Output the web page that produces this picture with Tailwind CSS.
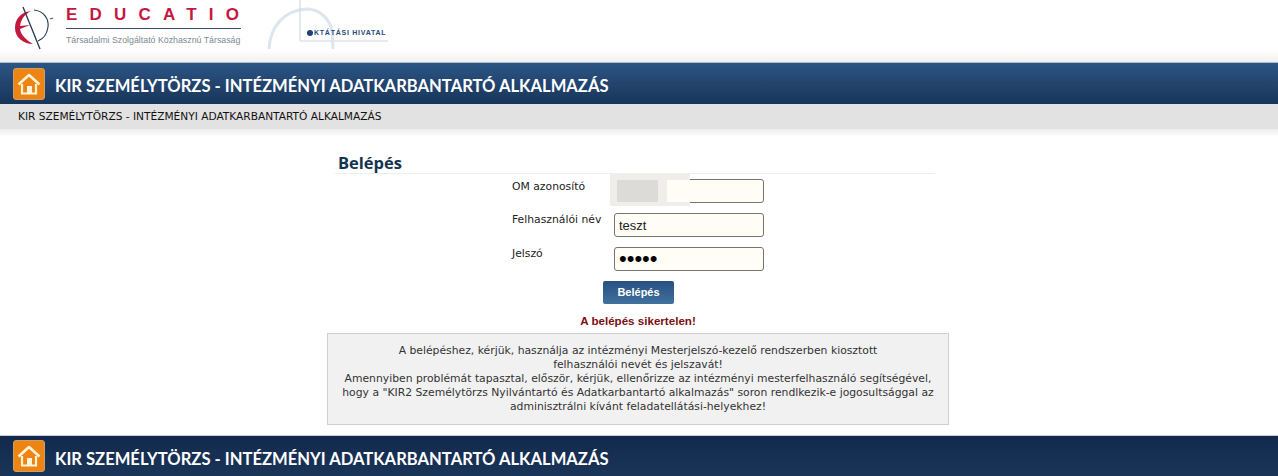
<!DOCTYPE html>
<html lang="hu">
<head>
  <meta charset="UTF-8">
  <title>KIR Személytörzs</title>
  <meta name="viewport" content="width=device-width, initial-scale=1.0">
  <script src="https://cdn.jsdelivr.net/npm/@tailwindcss/browser@4"></script>
</head>
<body class="bg-white h-[476px] overflow-hidden flex flex-col font-['DejaVu_Sans',sans-serif] text-[#222]">

  <!-- Logos -->
  <div class="h-[63px] shrink-0 flex bg-gradient-to-b from-white from-80% to-[#f1f1ef] border-b border-[#b4bcc8]">
    <svg class="ml-[12px] mt-[3px] w-[42px] h-[48px]" viewBox="0 0 42 48" fill="none">
      <path d="M19 8 C8 9 3 17 3 25 C3 35 12 41 21 41 C16 38 9 33 8 26 L18 22 L8 23 C9 16 13 11 19 8Z" fill="#c5183f"/>
      <path d="M11 4 L28 46" stroke="#24384f" stroke-width="1.3"/>
      <path d="M22 7 C32 8 37 16 36 24 C35 31 31 36 26 38" stroke="#24384f" stroke-width="1.1"/>
      <path d="M38 16 L41 15" stroke="#555" stroke-width="1.2"/>
    </svg>
    <div class="ml-[12px] w-[175px] flex flex-col">
      <div class="h-[28px] pt-[5px] text-[17px] leading-[20px] font-bold tracking-[12.2px] text-[#c5183f] font-['Liberation_Sans',sans-serif] whitespace-nowrap">EDUCATIO</div>
      <div class="h-px bg-[#36506b]"></div>
      <div class="mt-[5px] text-[8.8px] leading-[12px] text-[#7d8891] font-['Liberation_Sans',sans-serif] whitespace-nowrap">Társadalmi Szolgáltató Közhasznú Társaság</div>
    </div>
    <div class="relative ml-[25px] w-[122px] h-[52px]">
      <svg class="absolute left-0 top-0 w-[122px] h-[52px]" viewBox="0 0 122 52" fill="none">
        <path d="M3 49 C4 28 17 10 41 9 C53 9 63 18 66 30 L67 49" stroke="#dde6ee" stroke-width="3"/>
        <path d="M34 0 V41" stroke="#c9d2dc" stroke-width="1"/>
        <path d="M34 41 H122" stroke="#dfe5ea" stroke-width="1.5"/>
      </svg>
      <div class="absolute left-[41px] top-[28px] flex items-center gap-[1px] text-[7px] leading-[9px] font-bold tracking-[0.75px] text-[#26497c] whitespace-nowrap font-['Liberation_Sans',sans-serif]">
        <span class="w-[6px] h-[6px] rounded-full bg-[#1f3f78]"></span>KTÁTÁSI HIVATAL
      </div>
    </div>
  </div>

  <!-- Title bar -->
  <div class="h-[41px] shrink-0 flex items-center pl-[13px] gap-[10px] bg-gradient-to-b from-[#2c5585] to-[#183559]">
    <span class="w-[32px] h-[32px] rounded-[3px] bg-[#ee8412] border border-[#c9a06b] flex items-center justify-center">
      <svg class="w-[24px] h-[22px]" viewBox="0 0 24 22" fill="none">
        <path d="M1.5 11.5 L12 2 L22.5 11.5" stroke="#fff4d8" stroke-width="2.6" stroke-linejoin="round"/>
        <path d="M5 11 V20.5 H19 V11" stroke="#fff4d8" stroke-width="2.2"/>
        <rect x="10" y="13" width="5" height="7.5" fill="#fff4d8"/>
      </svg>
    </span>
    <span class="mt-[4px] text-[16.6px] leading-[24px] font-bold text-white font-['Lato',sans-serif] whitespace-nowrap">KIR SZEMÉLYTÖRZS - INTÉZMÉNYI ADATKARBANTARTÓ ALKALMAZÁS</span>
  </div>

  <!-- Breadcrumb -->
  <div class="h-[25px] shrink-0 pl-[18px] bg-[#e2e2e2] text-[10.6px] leading-[25px] text-[#111] whitespace-nowrap">KIR SZEMÉLYTÖRZS - INTÉZMÉNYI ADATKARBANTARTÓ ALKALMAZÁS</div>
  <div class="h-[8px] shrink-0 bg-gradient-to-b from-[#eeeeee] to-white"></div>

  <!-- Login -->
  <div class="flex-1 w-[622px] ml-[327px]">
    <div class="mt-[14px] ml-[8px] w-[600px] h-[23px] border-b border-[#eeeeee] pl-[3px] text-[16.5px] leading-[24px] font-bold text-[#12344f] font-['Open_Sans',sans-serif]">Belépés</div>

    <div class="relative ml-[185px] mt-[5px] flex flex-col gap-[10px] text-[10.8px]">
      <div class="flex h-[24px]">
        <label class="w-[102px] pt-[1px] leading-[14px]">OM azonosító</label>
        <input class="w-[150px] h-[24px] px-[4px] rounded-[3px] border border-[#77736d] bg-[#fffdf5]">
      </div>
      <div class="flex h-[24px]">
        <label class="w-[102px] leading-[14px]">Felhasználói név</label>
        <input value="teszt" class="w-[150px] h-[24px] px-[4px] rounded-[3px] border border-[#77736d] bg-[#fffdf5] text-[13px] text-[#222] font-['Liberation_Sans',sans-serif]">
      </div>
      <div class="flex h-[24px]">
        <label class="w-[102px] leading-[14px]">Jelszó</label>
        <input type="password" value="teszt" class="w-[150px] h-[24px] px-[4px] rounded-[3px] border border-[#77736d] bg-[#fffdf5] text-[22px] leading-[20px] text-black font-['Liberation_Sans',sans-serif]">
      </div>
      <!-- redacted id -->
      <div class="absolute left-[98px] top-[-5px] w-[80px] h-[32px] bg-[#efeeeb] flex items-start">
        <div class="mt-[6px] ml-[7px] w-[41px] h-[22px] bg-[#dcdbd8]"></div>
        <div class="mt-[6px] ml-[9px] w-[23px] h-[22px] bg-[#fffdf5]"></div>
      </div>
    </div>

    <button class="block mt-[10px] ml-[276px] w-[71px] h-[23px] rounded-[2px] bg-gradient-to-b from-[#27507f] to-[#41709f] text-[11px] leading-[23px] font-bold text-white font-['Liberation_Sans',sans-serif]">Belépés</button>
    <p class="mt-[10px] h-[14px] text-center text-[11.6px] leading-[14px] font-bold text-[#7b0f14] font-['Liberation_Sans',sans-serif]">A belépés sikertelen!</p>

    <div class="mt-[5px] h-[92px] border border-[#cfcfcf] bg-[#f1f1f1] pt-[10px] text-center text-[10.8px] leading-[14px] text-[#333]">
      A belépéshez, kérjük, használja az intézményi Mesterjelszó-kezelő rendszerben kiosztott<br>
      felhasználói nevét és jelszavát!<br>
      Amennyiben problémát tapasztal, először, kérjük, ellenőrizze az intézményi mesterfelhasználó segítségével,<br>
      hogy a "KIR2 Személytörzs Nyilvántartó és Adatkarbantartó alkalmazás" soron rendlkezik-e jogosultsággal az<br>
      adminisztrálni kívánt feladatellátási-helyekhez!
    </div>
  </div>

  <!-- Footer bar -->
  <div class="h-[41px] shrink-0 flex items-start pt-[4px] pl-[13px] gap-[10px] border-t border-[#c8ccd2] bg-gradient-to-b from-[#12294c] to-[#1a3558]">
    <span class="w-[32px] h-[32px] rounded-[3px] bg-[#ee8412] border border-[#c9a06b] flex items-center justify-center">
      <svg class="w-[24px] h-[22px]" viewBox="0 0 24 22" fill="none">
        <path d="M1.5 11.5 L12 2 L22.5 11.5" stroke="#fff4d8" stroke-width="2.6" stroke-linejoin="round"/>
        <path d="M5 11 V20.5 H19 V11" stroke="#fff4d8" stroke-width="2.2"/>
        <rect x="10" y="13" width="5" height="7.5" fill="#fff4d8"/>
      </svg>
    </span>
    <span class="mt-[7px] text-[16.6px] leading-[24px] font-bold text-white font-['Lato',sans-serif] whitespace-nowrap">KIR SZEMÉLYTÖRZS - INTÉZMÉNYI ADATKARBANTARTÓ ALKALMAZÁS</span>
  </div>
</body>
</html>
